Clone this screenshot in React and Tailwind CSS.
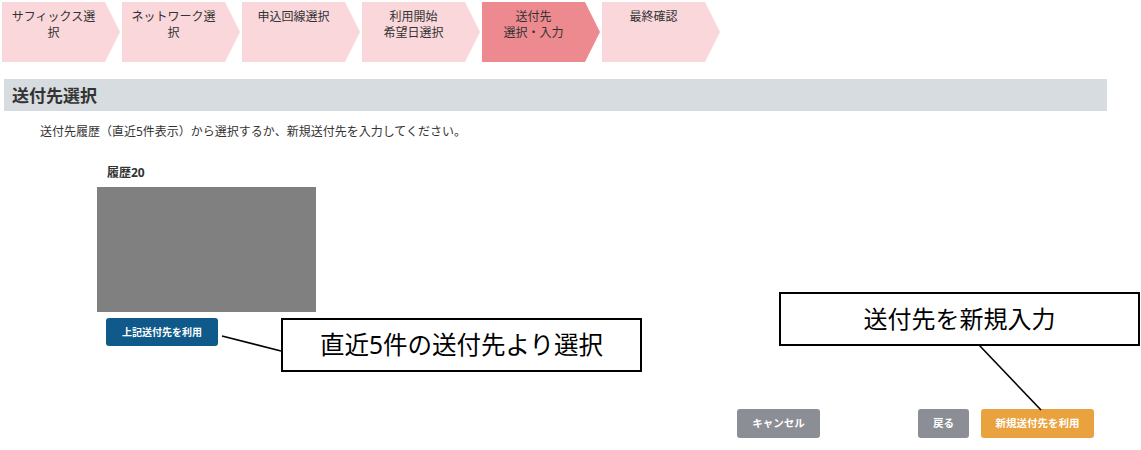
import React from 'react';

const steps = [
  { lines: ['サフィックス選', '択'], active: false },
  { lines: ['ネットワーク選', '択'], active: false },
  { lines: ['申込回線選択'], active: false },
  { lines: ['利用開始', '希望日選択'], active: false },
  { lines: ['送付先', '選択・入力'], active: true },
  { lines: ['最終確認'], active: false },
];

const Step = ({ lines, active }) => (
  <div
    className={`w-[118px] h-[60px] pl-2 pr-[23px] pt-[7px] text-center text-[12px] leading-[16px] text-[#333] [clip-path:polygon(0_0,103px_0,118px_50%,103px_100%,0_100%)] ${active ? 'bg-[#ec8a90]' : 'bg-[#f9d7da]'}`}
  >
    {lines.map((l, i) => (
      <div key={i}>{l}</div>
    ))}
  </div>
);

const App = () => {
  return (
    <div className="relative w-[1141px] h-[450px] bg-white overflow-hidden font-['Noto_Sans','Noto_Sans_CJK_JP',sans-serif]">
      {/* Step bar */}
      <div className="flex gap-[2px] pl-[2px] pt-[2px]">
        {steps.map((s, i) => (
          <Step key={i} {...s} />
        ))}
      </div>

      {/* Section header */}
      <div className="mt-[17px] ml-[4px] w-[1103px] h-[32px] bg-[#d6dcdf] pl-2 flex items-center">
        <h2 className="text-[17px] font-bold text-[#333] leading-none">送付先選択</h2>
      </div>

      <p className="mt-[13px] pl-[40px] text-[12px] leading-[16px] text-[#333]">
        送付先履歴（直近5件表示）から選択するか、新規送付先を入力してください。
      </p>

      {/* History card */}
      <div className="mt-[25px] ml-[97px] w-[219px]">
        <div className="pl-[10px] text-[12px] font-bold leading-[16px] text-[#333]">履歴20</div>
        <div className="mt-[6px] h-[125px] bg-[#808080]" />
        <button className="mt-[6px] ml-[9px] w-[112px] h-[28px] rounded-[3px] bg-[#0f5a8a] text-white text-[10px] font-bold">
          上記送付先を利用
        </button>
      </div>

      {/* Footer buttons */}
      <div className="mt-[63px] flex justify-end pr-[47px]">
        <button className="w-[83px] h-[29px] rounded-[3px] bg-[#8b8e94] text-white text-[10.5px] font-bold mr-[98px]">
          キャンセル
        </button>
        <button className="w-[51px] h-[29px] rounded-[3px] bg-[#8b8e94] text-white text-[10.5px] font-bold mr-[12px]">
          戻る
        </button>
        <button className="w-[113px] h-[29px] rounded-[3px] bg-[#e9a23d] text-white text-[10.5px] font-bold">
          新規送付先を利用
        </button>
      </div>

      {/* Annotation callouts */}
      <svg className="absolute inset-0 pointer-events-none" width="1141" height="450">
        <line x1="222" y1="336" x2="281" y2="351" stroke="#000" strokeWidth="1.6" />
        <line x1="979" y1="345" x2="1041" y2="410" stroke="#000" strokeWidth="1.6" />
      </svg>
      <div className="absolute left-[281px] top-[318px] w-[361px] h-[54px] border-2 border-black bg-white flex items-center justify-center text-[24.5px] leading-none text-black">
        直近5件の送付先より選択
      </div>
      <div className="absolute left-[779px] top-[292px] w-[361px] h-[54px] border-2 border-black bg-white flex items-center justify-center text-[24px] leading-none text-black">
        送付先を新規入力
      </div>
    </div>
  );
};

export default App;
